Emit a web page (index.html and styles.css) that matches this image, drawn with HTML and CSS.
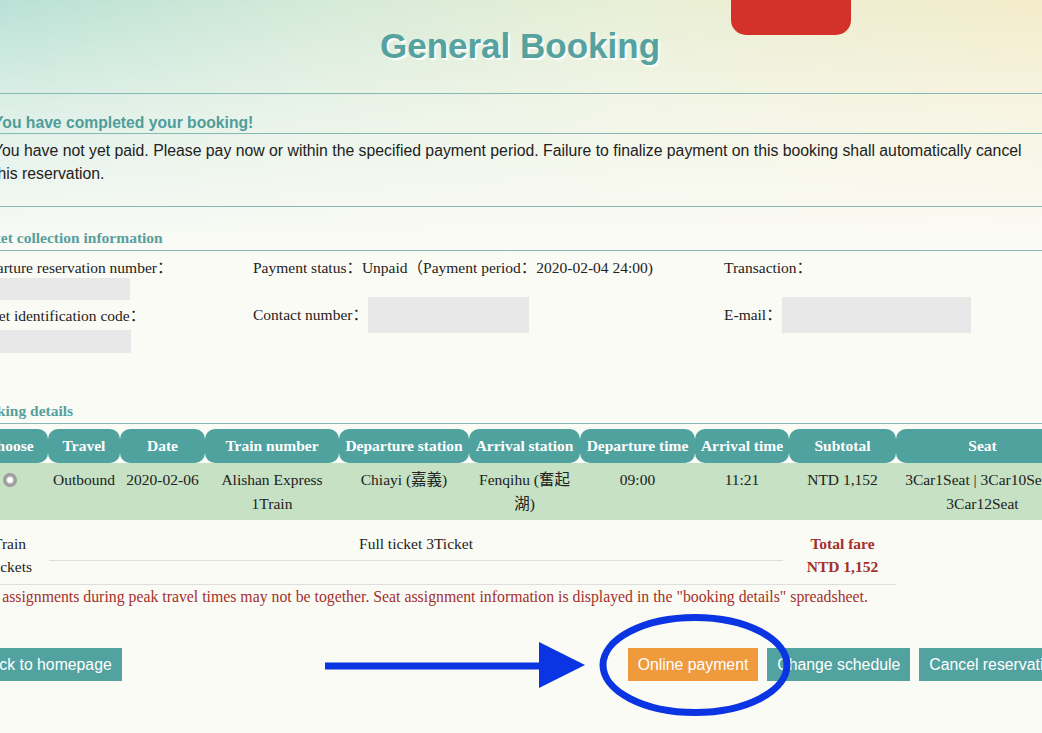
FILE: index.html
```html
<!DOCTYPE html>
<html lang="en">
<head>
<meta charset="utf-8">
<title>General Booking</title>
<link rel="stylesheet" href="styles.css">
</head>
<body>
<div class="page">
  <header class="masthead">
    <h1 class="title">General Booking</h1>
  </header>

  <section class="notice">
    <h2 class="notice-head">You have completed your booking!</h2>
    <p class="notice-text">You have not yet paid. Please pay now or within the specified payment period. Failure to finalize payment on this booking shall automatically cancel this reservation.</p>
  </section>

  <section class="collect">
    <h3 class="sec-head">Ticket collection information</h3>
    <div class="info-row row-one">
      <div class="info-cell stack">
        <span>Departure reservation number：</span>
        <span class="mask mask-a"></span>
      </div>
      <div class="info-cell">Payment status：Unpaid（Payment period：2020-02-04 24:00)</div>
      <div class="info-cell">Transaction：</div>
    </div>
    <div class="info-row row-two">
      <div class="info-cell stack lowered">
        <span>Ticket identification code：</span>
        <span class="mask mask-b"></span>
      </div>
      <div class="info-cell inline">
        <span>Contact number：</span>
        <span class="mask mask-c"></span>
      </div>
      <div class="info-cell inline">
        <span>E-mail：</span>
        <span class="mask mask-d"></span>
      </div>
    </div>
  </section>

  <section class="details">
    <h3 class="sec-head">Booking details</h3>
    <div class="cols thead">
      <div class="th">Choose</div>
      <div class="th">Travel</div>
      <div class="th">Date</div>
      <div class="th">Train number</div>
      <div class="th">Departure station</div>
      <div class="th">Arrival station</div>
      <div class="th">Departure time</div>
      <div class="th">Arrival time</div>
      <div class="th">Subtotal</div>
      <div class="th">Seat</div>
    </div>
    <div class="cols tbody">
      <div class="td"><span class="radio"></span></div>
      <div class="td">Outbound</div>
      <div class="td">2020-02-06</div>
      <div class="td">Alishan Express 1Train</div>
      <div class="td">Chiayi (嘉義)</div>
      <div class="td">Fenqihu (奮起湖)</div>
      <div class="td">09:00</div>
      <div class="td">11:21</div>
      <div class="td">NTD 1,152</div>
      <div class="td">3Car1Seat | 3Car10Seat | 3Car12Seat</div>
    </div>
    <div class="summary">
      <div class="sum-label">Train Tickets</div>
      <div class="sum-mid">Full ticket 3Ticket</div>
      <div class="sum-total">Total fare<br>NTD 1,152</div>
    </div>
    <p class="warn">Seat assignments during peak travel times may not be together. Seat assignment information is displayed in the "booking details" spreadsheet.</p>
  </section>

  <div class="actions">
    <button class="btn">Back to homepage</button>
    <div class="btn-group">
      <button class="btn btn-pay">Online payment</button>
      <button class="btn">Change schedule</button>
      <button class="btn">Cancel reservation</button>
    </div>
  </div>
</div>

<div class="tab"></div>

<svg class="annot" width="1042" height="733" viewBox="0 0 1042 733" aria-hidden="true">
  <line x1="325" y1="666" x2="545" y2="666" stroke="#0b34e2" stroke-width="7"/>
  <polygon points="539,642 585,665 539,688" fill="#0b34e2"/>
  <ellipse cx="695" cy="665" rx="92" ry="47.5" fill="none" stroke="#0b34e2" stroke-width="7"/>
</svg>
</body>
</html>
```

FILE: styles.css
```css
html, body {
  margin: 0;
  padding: 0;
  overflow: hidden;
}

body {
  min-height: 733px;
  font-family: "Liberation Serif", "Noto Sans CJK SC", serif;
  color: #222;
  background:
    linear-gradient(180deg, rgba(251, 251, 246, 0) 0px, rgba(251, 251, 246, 0.55) 110px, #fbfbf6 250px),
    linear-gradient(90deg, #b9e1d6 0%, #d4ead8 30%, #e8efd6 60%, #f3ecca 100%);
}

.page {
  width: 1098px;
  margin-left: -29px;
}

/* header */
.masthead {
  box-sizing: border-box;
  height: 93px;
  padding-top: 26px;
}

.title {
  margin: 0;
  text-align: center;
  font-family: "Liberation Sans", Arial, sans-serif;
  font-size: 35px;
  line-height: 40px;
  font-weight: bold;
  color: #55a29f;
  text-shadow: 2px 2px 1px #ffffff;
}

/* notice */
.notice {
  border-top: 1px solid #86b8b5;
}

.notice-head {
  margin: 0;
  padding: 19px 22px 0;
  font-family: "Liberation Sans", Arial, sans-serif;
  font-size: 15.7px;
  line-height: 20px;
  font-weight: bold;
  color: #4f9d9a;
  border-bottom: 1px solid #86b8b5;
}

.notice-text {
  margin: 5px 0 21px;
  padding: 0 35px 0 22px;
  font-family: "Liberation Sans", Arial, sans-serif;
  font-size: 15.8px;
  line-height: 23px;
  color: #222;
}

/* section heads */
.sec-head {
  margin: 0;
  padding: 0 0 2px;
  font-size: 15.5px;
  line-height: 20px;
  font-weight: bold;
  color: #57a09d;
  border-bottom: 1px solid #86b8b5;
}

.collect {
  border-top: 1px solid #86b8b5;
}

.collect .sec-head {
  padding-top: 21px;
}

.info-row {
  display: grid;
  grid-template-columns: 282px 471px 345px;
  align-items: start;
  font-size: 15.5px;
  line-height: 20px;
}

.row-one {
  margin-top: 7px;
}

.info-cell.stack {
  display: flex;
  flex-direction: column;
  align-items: flex-start;
}

.info-cell.inline {
  display: flex;
  align-items: center;
}

.row-one .mask-a {
  margin-bottom: -3px;
}

.lowered {
  padding-top: 9px;
}

.mask {
  display: block;
  background: #e8e8e8;
}

.mask-a { width: 159px; height: 22px; }
.mask-b { width: 160px; height: 23px; margin-top: 4px; }
.mask-c { width: 161px; height: 36px; }
.mask-d { width: 189px; height: 36px; }

/* booking details */
.details .sec-head {
  margin-top: 48px;
}

.cols {
  display: grid;
  grid-template-columns: 77px 72px 85px 134px 130px 111px 115px 94px 107px 173px;
}

.thead {
  margin-top: 5px;
}

.th {
  height: 34px;
  display: flex;
  align-items: center;
  justify-content: center;
  white-space: nowrap;
  background: #50a29f;
  color: #ffffff;
  font-weight: bold;
  font-size: 15.5px;
  border-radius: 10px;
}

.tbody {
  background: #c6e1c3;
  padding: 5px 0 4px;
  font-size: 15.5px;
  line-height: 24px;
  color: #222;
}

.td {
  text-align: center;
  padding: 0 4px;
}

.radio {
  display: inline-block;
  width: 14px;
  height: 14px;
  margin-top: 5px;
  border-radius: 50%;
  background: radial-gradient(circle, #ffffff 0 2.5px, #b9b9b9 3.5px, #9c9c9c 5px);
  vertical-align: top;
}

/* summary */
.summary {
  width: 925px;
  display: grid;
  grid-template-columns: 77px 741px 107px;
  align-items: start;
  padding: 12px 0 6px;
  border-bottom: 1px solid #dedede;
  font-size: 15.5px;
  line-height: 23px;
}

.sum-label {
  text-align: center;
}

.sum-mid {
  margin: 0 6px 0 1px;
  padding-bottom: 5px;
  border-bottom: 1px solid #dedede;
  text-align: center;
}

.sum-total {
  text-align: center;
  font-weight: bold;
  color: #a3302c;
}

.warn {
  margin: 2px 0 0;
  font-size: 15.8px;
  line-height: 20px;
  color: #a3302c;
}

/* actions */
.actions {
  display: flex;
  justify-content: space-between;
  margin: 41px -2px 0 -1px;
}

.btn-group {
  display: flex;
  gap: 9px;
}

.btn {
  height: 33px;
  padding: 0 10px;
  border: 0;
  border-radius: 0;
  background: #52a29f;
  color: #ffffff;
  font-family: "Liberation Sans", Arial, sans-serif;
  font-size: 15.8px;
  line-height: 33px;
  white-space: nowrap;
}

.btn-pay {
  background: #f09a3e;
}

/* overlays */
.tab {
  position: absolute;
  left: 731px;
  top: 0;
  width: 120px;
  height: 35px;
  background: #d4312a;
  border-radius: 0 0 15px 15px;
}

.annot {
  position: absolute;
  left: 0;
  top: 0;
  pointer-events: none;
}
```
